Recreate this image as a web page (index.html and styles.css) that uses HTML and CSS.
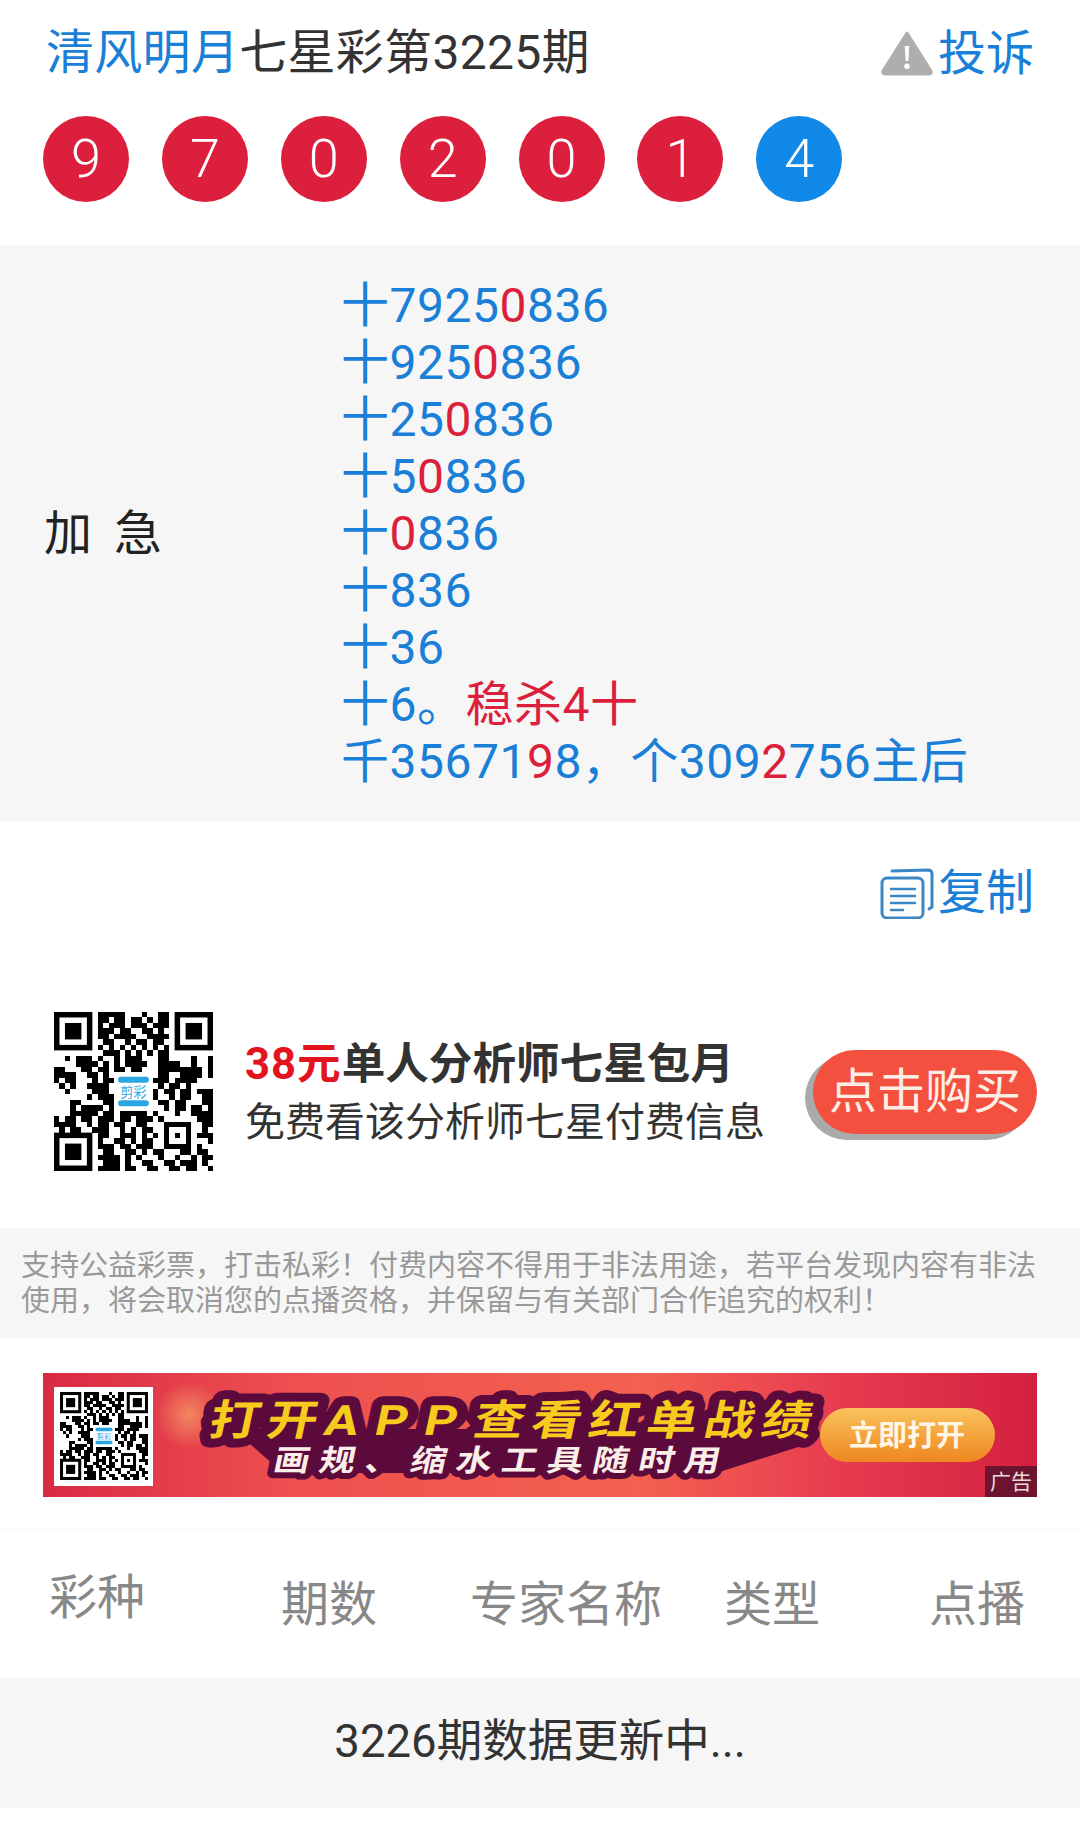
FILE: index.html
```html
<!DOCTYPE html>
<html lang="zh-CN">
<head>
    <meta charset="UTF-8">
    <meta name="viewport" content="width=device-width, initial-scale=1.0">
    <title>七星彩第3225期</title>
    <link rel="stylesheet" href="styles.css">
</head>
<body>
    <section class="top">
        <div class="title-row">
            <h1 class="title"><span class="blue">清风明月</span>七星彩第3225期</h1>
            <a class="report blue">
                <svg class="warn-icon" viewBox="0 0 54 46" width="54" height="46">
                    <path d="M27 3 L51 41 Q52 44 49 44 L5 44 Q2 44 3 41 Z" fill="#aeaeae" stroke="#aeaeae" stroke-width="3" stroke-linejoin="round"/>
                    <path d="M24.8 16h4.4l-.8 15h-2.8z M27 33.5a2.7 2.7 0 1 1 0 5.4a2.7 2.7 0 1 1 0-5.4z" fill="#fff"/>
                </svg>
                投诉
            </a>
        </div>
        <div class="balls">
            <span class="ball">9</span>
            <span class="ball">7</span>
            <span class="ball">0</span>
            <span class="ball">2</span>
            <span class="ball">0</span>
            <span class="ball">1</span>
            <span class="ball ball-blue">4</span>
        </div>
    </section>

    <section class="tip-box">
        <div class="tip-label">加&nbsp;急</div>
        <div class="tip-text">
            <div>十7925<em>0</em>836</div>
            <div>十925<em>0</em>836</div>
            <div>十25<em>0</em>836</div>
            <div>十5<em>0</em>836</div>
            <div>十<em>0</em>836</div>
            <div>十836</div>
            <div>十36</div>
            <div>十6。<em>稳杀4十</em></div>
            <div>千35671<em>9</em>8&#65292;个309<em>2</em>756主后</div>
        </div>
    </section>

    <section class="copy-row">
        <a class="copy blue">
            <svg class="copy-icon" viewBox="0 0 54 52" width="54" height="52" fill="none" stroke="#3b87c6" stroke-width="3" stroke-linecap="round">
                <path d="M12 4 L48 3 Q52 3 52 7 L52 40 L49 42"/>
                <rect x="2" y="11" width="41" height="40" rx="5"/>
                <path d="M11 22h24M11 29h24M11 36h24M11 43h12" stroke-width="2.5"/>
            </svg>
            复制
        </a>
    </section>

    <section class="promo">
        <svg class="promo-qr" viewBox="0 0 29 29">
            <g id="qr">
                <g fill="none" stroke="#000">
                    <rect x=".5" y=".5" width="6" height="6"/>
                    <rect x="22.5" y=".5" width="6" height="6"/>
                    <rect x=".5" y="22.5" width="6" height="6"/>
                </g>
                <rect x="2" y="2" width="3" height="3"/>
                <rect x="24" y="2" width="3" height="3"/>
                <rect x="2" y="24" width="3" height="3"/>
                <path fill="none" stroke="#000" shape-rendering="crispEdges" d="M8 .5h4M12 .5h1M16 .5h1M19 .5h2
                    M8 1.5h2M11 1.5h2M14 1.5h2M17 1.5h1M19 1.5h2
                    M8 2.5h1M10 2.5h3M14 2.5h3M18 2.5h3
                    M8 3.5h3M12 3.5h2M16 3.5h2M19 3.5h1
                    M8 4.5h2M11 4.5h4M17 4.5h4
                    M9 5.5h2M13 5.5h1M15 5.5h2M18 5.5h2
                    M8 6.5h1M10 6.5h1M12 6.5h1M14 6.5h1M16 6.5h1M18 6.5h1M20 6.5h1
                    M9 7.5h3M13 7.5h1M15 7.5h1M17 7.5h1M19 7.5h2
                    M2 8.5h1M4 8.5h3M8 8.5h1M11 8.5h1M13 8.5h3M19 8.5h2M25 8.5h1M28 8.5h1
                    M4 9.5h4M9 9.5h1M11 9.5h1M13 9.5h4M19 9.5h3M22 9.5h1M25 9.5h1M28 9.5h1
                    M0 10.5h2M5 10.5h2M8 10.5h2M11 10.5h2M14 10.5h2M19 10.5h5M24 10.5h3M28 10.5h1
                    M0 11.5h4M6 11.5h2M9 11.5h1M19 11.5h2M23 11.5h2M25 11.5h2M28 11.5h1
                    M0 12.5h1M2 12.5h2M7 12.5h1M9 12.5h2M18 12.5h3M22 12.5h3M25 12.5h1
                    M1 13.5h1M3 13.5h1M6 13.5h4M19 13.5h1M21 13.5h2M24 13.5h1
                    M2 14.5h1M7 14.5h3M18 14.5h1M20 14.5h2M23 14.5h2M26 14.5h3
                    M6 15.5h1M8 15.5h3M18 15.5h1M21 15.5h1M23 15.5h2M27 15.5h2
                    M3 16.5h2M9 16.5h2M19 16.5h2M22 16.5h2M27 16.5h2
                    M3 17.5h1M5 17.5h4M10 17.5h1M20 17.5h1M22 17.5h2M25 17.5h2M28 17.5h1
                    M3 18.5h5M9 18.5h2M12 18.5h4M16 18.5h1M18 18.5h1M22 18.5h1M25 18.5h4
                    M0 19.5h1M2 19.5h2M5 19.5h2M8 19.5h3M12 19.5h2M15 19.5h3M19 19.5h1M26 19.5h3
                    M0 20.5h3M3 20.5h1M6 20.5h1M8 20.5h2M11 20.5h2M15 20.5h2M20 20.5h5M27 20.5h2
                    M1 21.5h1M3 21.5h2M7 21.5h3M12 21.5h1M14 21.5h1M16 21.5h2M20 21.5h1M24 21.5h1M27 21.5h1
                    M8 22.5h2M12 22.5h3M16 22.5h1M18 22.5h1M20 22.5h1M22 22.5h1M24 22.5h1M26 22.5h3
                    M8 23.5h1M11 23.5h2M14 23.5h1M16 23.5h2M20 23.5h1M24 23.5h1M28 23.5h1
                    M8 24.5h3M12 24.5h2M15 24.5h3M20 24.5h5M26 24.5h1
                    M9 25.5h2M13 25.5h2M16 25.5h1M18 25.5h2M23 25.5h2M26 25.5h2
                    M8 26.5h4M13 26.5h1M15 26.5h1M19 26.5h1M22 26.5h1M25 26.5h1M27 26.5h2
                    M9 27.5h3M13 27.5h1M16 27.5h2M20 27.5h2M23 27.5h3M27 27.5h1
                    M8 28.5h4M13 28.5h2M17 28.5h2M21 28.5h2M24 28.5h2M28 28.5h1"/>
                <rect x="11" y="11" width="7" height="7" fill="#fff"/>
                <rect x="11.7" y="11.8" width="5.6" height="1.1" rx=".5" fill="#2aa6e2"/>
                <rect x="11.7" y="16.1" width="5.6" height="1.1" rx=".5" fill="#2aa6e2"/>
                <text x="14.5" y="15.5" text-anchor="middle" font-size="2.4" fill="#2aa6e2">剪彩</text>
            </g>
        </svg>
        <div class="promo-text">
            <div class="promo-head"><span class="price">38元</span>单人分析师七星包月</div>
            <div class="promo-sub">免费看该分析师七星付费信息</div>
        </div>
        <a class="buy-btn">点击购买</a>
    </section>

    <section class="notice">支持公益彩票&#65292;打击私彩&#65281;付费内容不得用于非法用途&#65292;若平台发现内容有非法使用&#65292;将会取消您的点播资格&#65292;并保留与有关部门合作追究的权利&#65281;</section>

    <section class="banner-wrap">
        <svg class="banner" viewBox="0 0 994 124" width="994" height="124">
            <defs>
                <linearGradient id="bannerBg" x1="0" x2="1" y1="0" y2="0">
                    <stop offset="0" stop-color="#d92a44"/>
                    <stop offset=".25" stop-color="#ee5050"/>
                    <stop offset=".6" stop-color="#f4614f"/>
                    <stop offset=".8" stop-color="#e73c50"/>
                    <stop offset="1" stop-color="#d4203f"/>
                </linearGradient>
                <linearGradient id="btnBg" x1="0" x2="0" y1="0" y2="1">
                    <stop offset="0" stop-color="#f9c35c"/>
                    <stop offset="1" stop-color="#ef8620"/>
                </linearGradient>
                <radialGradient id="glow">
                    <stop offset="0" stop-color="#f7a56a" stop-opacity=".7"/>
                    <stop offset="1" stop-color="#f7a56a" stop-opacity="0"/>
                </radialGradient>
            </defs>
            <rect width="994" height="124" fill="url(#bannerBg)"/>
            <ellipse cx="146" cy="42" rx="34" ry="34" fill="url(#glow)"/>
            <rect x="11" y="14" width="99" height="99" fill="#fff"/>
            <svg x="17" y="19" width="88" height="88" viewBox="0 0 29 29"><use href="#qr"/></svg>
            <polygon class="blob" points="190,56 770,56 768,70 673,100 240,100"/>
            <text class="banner-title" transform="translate(164 62) scale(1.2 1) skewX(-10)">打开<tspan class="banner-app">APP</tspan>查看红单战绩</text>
            <text class="banner-sub" transform="translate(229 98) scale(1.2 1) skewX(-10)">画规、缩水工具随时用</text>
            <rect x="777" y="35" width="175" height="54" rx="27" fill="url(#btnBg)"/>
            <text class="banner-btn" x="864" y="73" text-anchor="middle">立即打开</text>
            <rect x="942" y="93" width="52" height="31" fill="#6d1530"/>
            <text class="banner-tag" x="968" y="116" text-anchor="middle">广告</text>
        </svg>
    </section>

    <section class="table-head">
        <span class="col-first">彩种</span>
        <span>期数</span>
        <span>专家名称</span>
        <span>类型</span>
        <span>点播</span>
    </section>

    <section class="table-empty">3226期数据更新中...</section>
</body>
</html>
```

FILE: styles.css
```css
*{
    box-sizing: border-box;
}
body{
    margin: 0;
    background-color: #fff;
    font-family: Roboto, "Noto Sans CJK SC", sans-serif;
    font-size: 48px;
    color: #333;
}
a{
    text-decoration: none;
}
.blue{
    color: #1a7fd6;
}

/* 顶部 */
.top{
    height: 245px;
    padding: 25px 46px 0 43px;
}
.title-row{
    display: flex;
    justify-content: space-between;
    height: 56px;
}
.title{
    margin: 0 0 0 3px;
    font-size: 48px;
    font-weight: normal;
    line-height: 56px;
    letter-spacing: .3px;
}
.report{
    display: flex;
    align-items: center;
    margin-top: 2px;
    line-height: 56px;
}
.warn-icon{
    margin: -2px 4px 0 0;
}
.balls{
    display: flex;
    gap: 32.9px;
    margin-top: 35px;
}
.ball{
    width: 86px;
    height: 86px;
    border-radius: 50%;
    background-color: #dc1f3c;
    color: #fff;
    font-size: 54px;
    font-weight: 300;
    line-height: 86px;
    text-align: center;
}
.ball-blue{
    background-color: #1189e8;
}

/* 方案内容 */
.tip-box{
    display: flex;
    align-items: center;
    height: 576px;
    padding-left: 44px;
    background-color: #f6f6f6;
}
.tip-label{
    width: 297px;
    color: #222;
    line-height: 57px;
    word-spacing: 10px;
}
.tip-text{
    color: #1a7fd6;
    line-height: 57px;
    letter-spacing: .5px;
}
.tip-text em{
    font-style: normal;
    color: #dc1f3c;
}

/* 复制 */
.copy-row{
    display: flex;
    justify-content: flex-end;
    align-items: center;
    height: 134px;
    padding-right: 46px;
}
.copy{
    display: flex;
    align-items: center;
    gap: 4px;
}
.copy-icon{
    margin-top: 10px;
}

/* 包月 */
.promo{
    display: flex;
    align-items: center;
    height: 273px;
    padding: 0 43px 0 54px;
}
.promo-qr{
    width: 159px;
    height: 159px;
    flex-shrink: 0;
}
.promo-text{
    margin-left: 32px;
    padding-top: 5px;
    flex: 1;
}
.promo-head{
    font-size: 43.6px;
    font-weight: bold;
    line-height: 58px;
}
.price{
    color: #e3141e;
    letter-spacing: 1px;
}
.promo-sub{
    font-size: 40px;
    line-height: 58px;
}
.buy-btn{
    width: 224px;
    height: 84px;
    border-radius: 42px;
    background-color: #f4503f;
    box-shadow: -8px 6px 0 #aaa;
    color: #fdeee6;
    font-size: 48px;
    line-height: 84px;
    text-align: center;
}

/* 提示 */
.notice{
    height: 110px;
    padding: 21px 30px 0 21px;
    background-color: #f6f6f6;
    color: #999;
    font-size: 29px;
    line-height: 35px;
}

/* 广告 */
.banner-wrap{
    height: 190px;
    padding: 35px 43px 0;
}
.banner{
    display: block;
}
.blob{
    fill: #5c0a3c;
}
.banner-title{
    font-size: 42px;
    font-weight: bold;
    letter-spacing: 6px;
    fill: #f7cb1d;
    stroke: #5c0a3c;
    stroke-width: 18px;
    stroke-linejoin: round;
    paint-order: stroke fill;
}
.banner-app{
    letter-spacing: 14px;
}
.banner-sub{
    font-size: 30px;
    font-weight: bold;
    letter-spacing: 8px;
    fill: #fbeee8;
    stroke: #5c0a3c;
    stroke-width: 12px;
    stroke-linejoin: round;
    paint-order: stroke fill;
}
.banner-btn{
    font-size: 29px;
    font-weight: bold;
    fill: #fff6e6;
}
.banner-tag{
    font-size: 21px;
    fill: #eadada;
}

/* 表格 */
.table-head{
    display: grid;
    grid-template-columns: 232px 189px 254px 205px 1fr;
    align-items: center;
    height: 150px;
    padding-left: 49px;
    color: #888;
    line-height: 56px;
    border-top: 3px solid #fafafa;
}
.col-first{
    margin-top: -14px;
}
.table-empty{
    height: 130px;
    background-color: #f6f6f6;
    font-size: 45.5px;
    line-height: 128px;
    text-align: center;
}
```
